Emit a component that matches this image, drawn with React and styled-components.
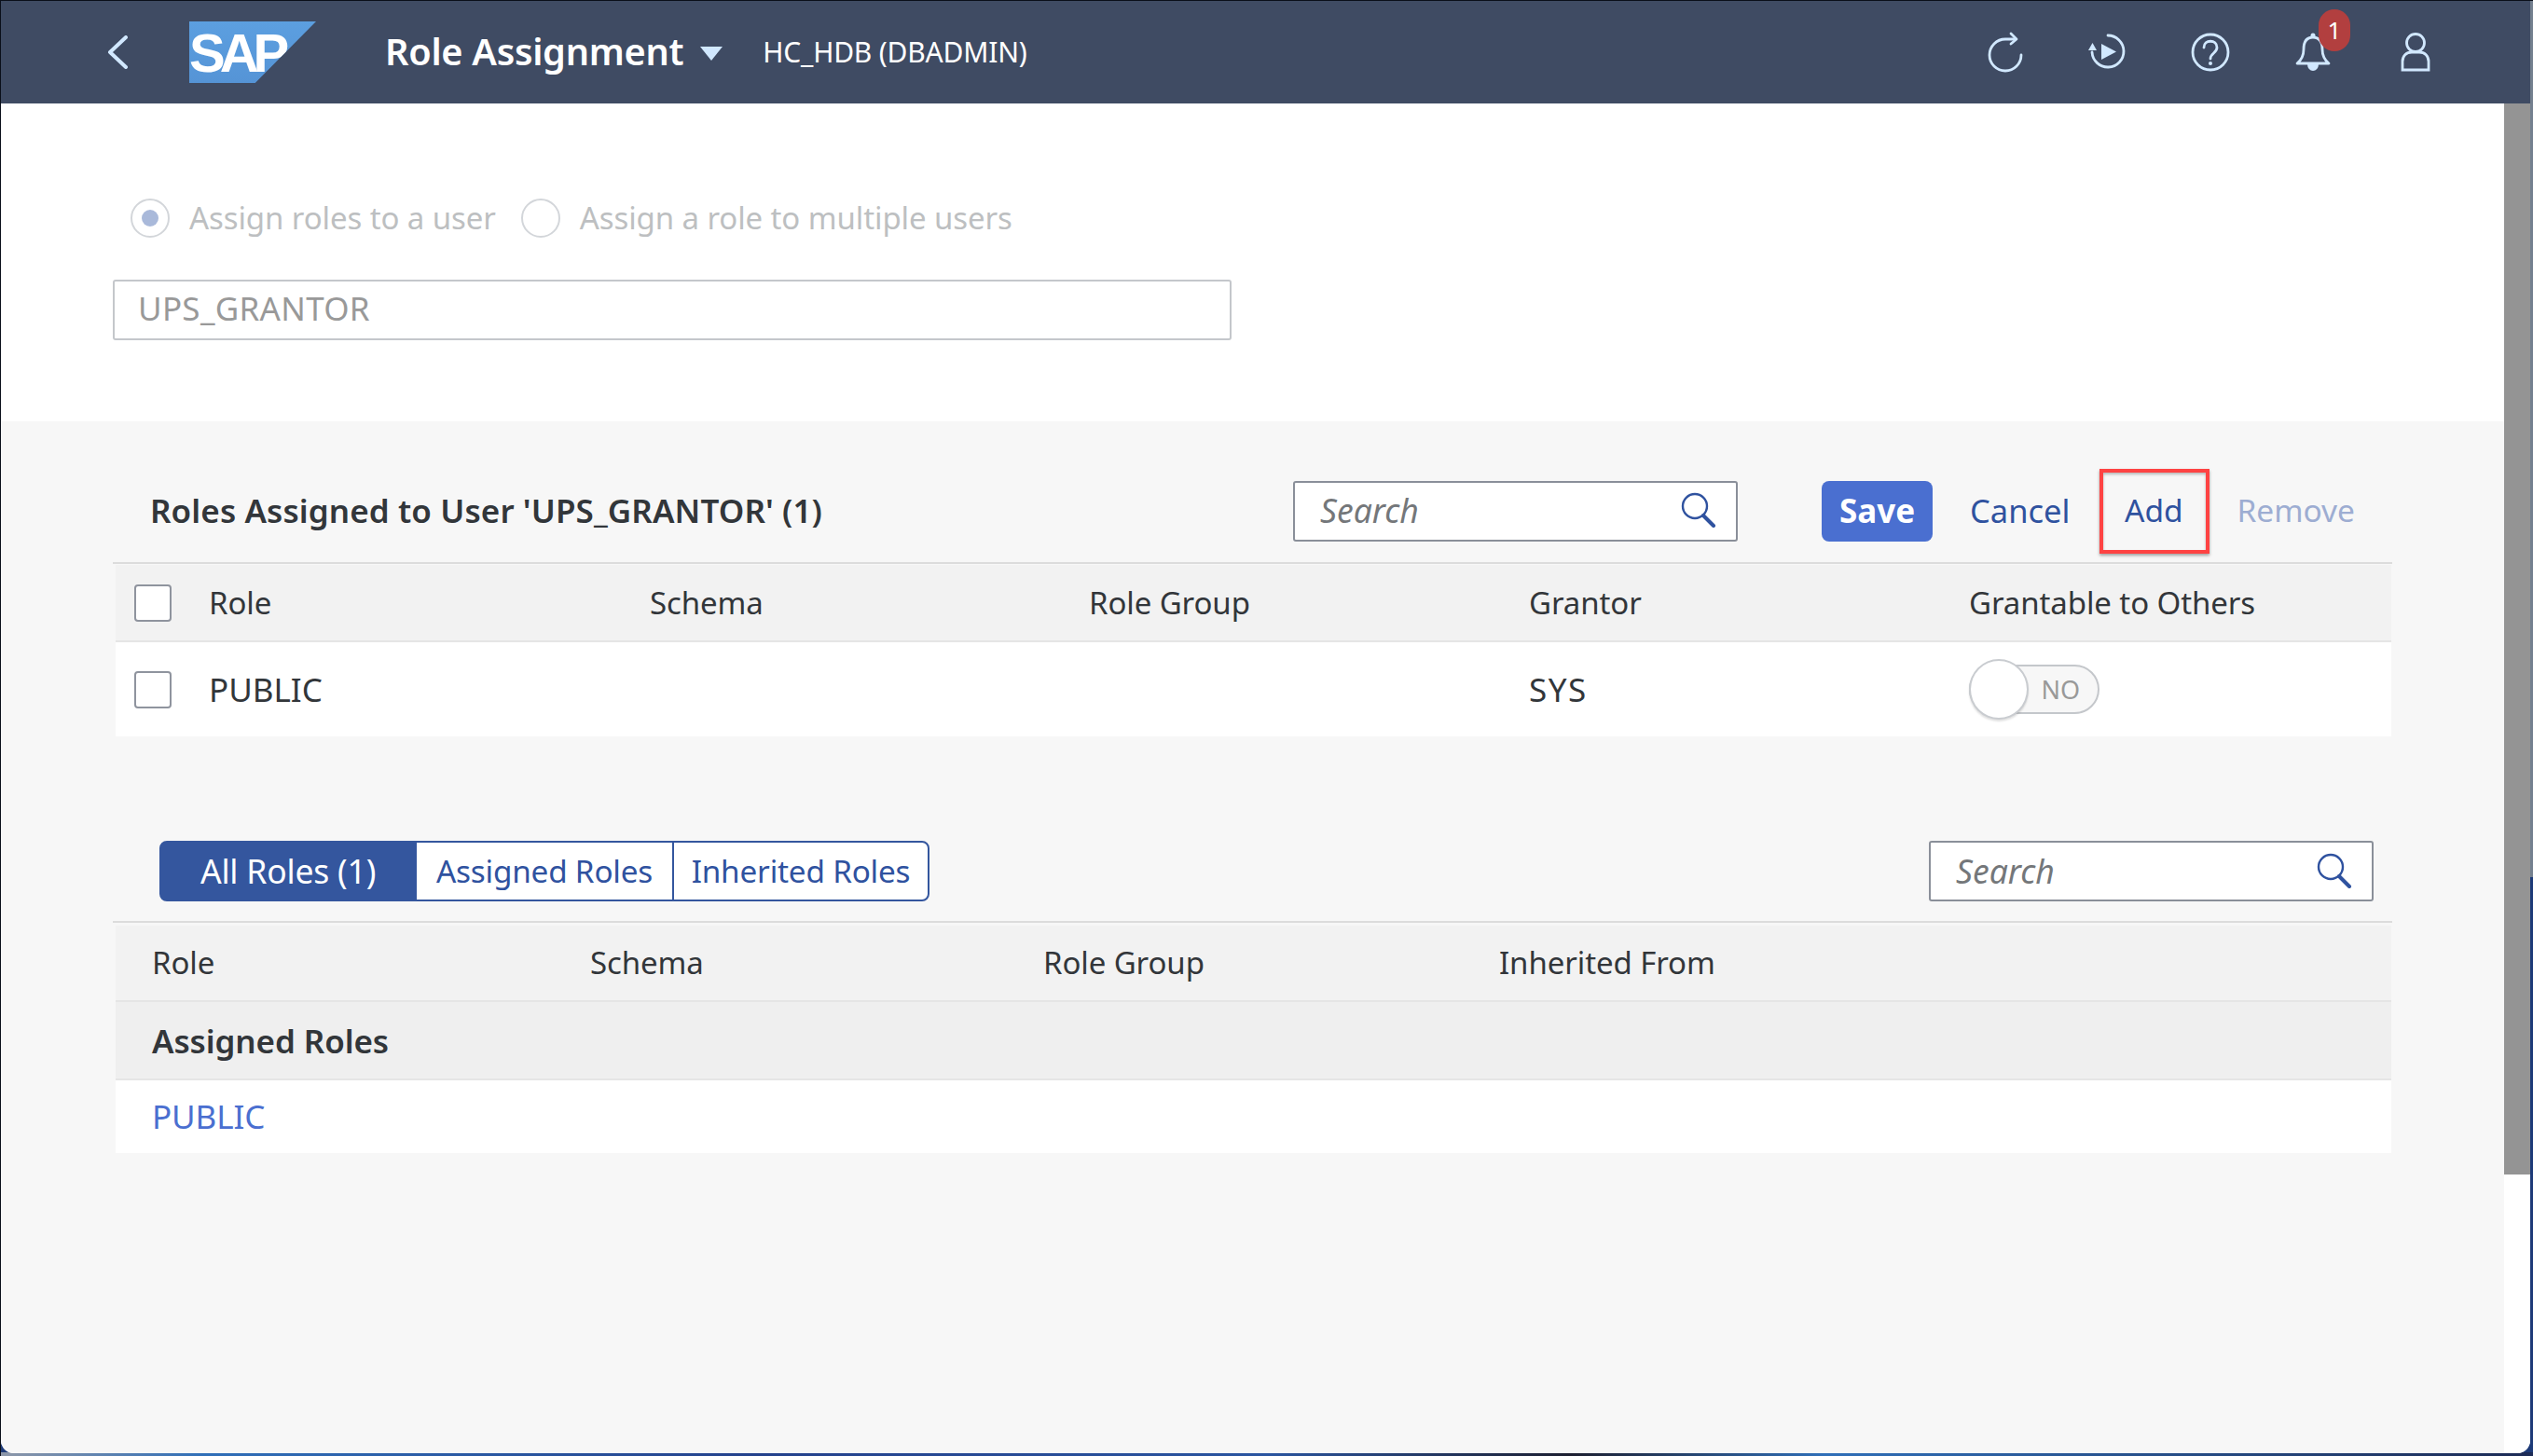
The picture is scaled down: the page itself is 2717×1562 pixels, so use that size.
import React from "react"
import styled, {createGlobalStyle} from "styled-components"

const Global = createGlobalStyle`
  html, body { margin: 0; padding: 0; background: #1d2b55; }
  body { font-family: "Noto Sans", "Open Sans", sans-serif; color: #32363a; }
`

const Screen = styled.div`
  width: 2717px;
  height: 1562px;
  overflow: hidden;
  box-sizing: border-box;
  padding: 0 3px 3px 0;
  border-top: 1px solid #0a0f1a;
  border-left: 1px solid #0a0f1a;
  background:
    linear-gradient(90deg, #8d97a8 0, #2f6fb8 8%, #24418c 30%, #2a55a0 50%, #1d1f30 62%, #2f6fb8 72%, #1d2b55 100%) bottom / 100% 4px no-repeat,
    linear-gradient(180deg, #74808f 0, #74808f 940px, #1d3a78 940px);
`

const Window = styled.div`
  height: 100%;
  display: flex;
  flex-direction: column;
  background: #fff;
  border-radius: 0 0 14px 14px;
  overflow: hidden;
`

const Shell = styled.header`
  flex: 0 0 110px;
  display: flex;
  align-items: center;
  background: #3f4b63;
  color: #fff;
  padding-left: 113px;
`

const LogoBox = styled.div`
  width: 136px;
  height: 66px;
  margin: 0 74px 0 65px;
  background: linear-gradient(180deg, #5c9fe0, #5594d6);
  clip-path: polygon(0 0, 100% 0, 52% 100%, 0 100%);
  color: #fff;
  font: 700 58px/68px "Liberation Sans", sans-serif;
  letter-spacing: -6px;
  padding-left: 0;
  box-sizing: border-box;
`

const AppTitle = styled.h1`
  margin: 0;
  font-size: 39.7px;
  font-weight: 600;
  letter-spacing: -0.3px;
  line-height: 1;
`

const Caret = styled.svg`
  width: 24px;
  height: 15px;
  margin: 3px 43px 0 18px;
`

const SystemName = styled.span`
  font-size: 30px;
  letter-spacing: -0.2px;
  padding-bottom: 2px;
`

const ShellIcons = styled.div`
  margin-left: auto;
  display: flex;
  align-items: center;
  gap: 70px;
  padding-right: 103px;
`

const ShellIcon = styled.div`
  position: relative;
  width: 40px;
  height: 42px;
  svg {
    display: block;
    width: 100%;
    height: 100%;
    overflow: visible;
    fill: none;
    stroke: #d1e8ff;
    stroke-width: 2.8;
    stroke-linecap: round;
    stroke-linejoin: round;
  }
`

const Badge = styled.span`
  position: absolute;
  top: -25px;
  left: 26px;
  width: 34px;
  height: 45px;
  border-radius: 17px;
  background: #b23f3f;
  color: #fff;
  font-size: 26px;
  line-height: 44px;
  text-align: center;
`

const Body = styled.div`
  flex: 1;
  display: flex;
  min-height: 0;
`

const Main = styled.main`
  flex: 1;
  display: flex;
  flex-direction: column;
  min-width: 0;
`

const Scroller = styled.div`
  flex: 0 0 28px;
  background: #fff;
`

const ScrollThumb = styled.div`
  height: 1149px;
  background: #949494;
`

const TopPanel = styled.section`
  flex: 0 0 341px;
  box-sizing: border-box;
  padding: 102px 0 0 120px;
`

const RadioRow = styled.div`
  display: flex;
  align-items: center;
  height: 41px;
  margin-left: 19px;
  color: #bdbfc1;
  font-size: 33px;
`

const RadioMark = styled.span`
  flex: none;
  box-sizing: border-box;
  width: 42px;
  height: 42px;
  border: 2px solid #d3d6da;
  border-radius: 50%;
  margin-right: 21px;
  display: flex;
  align-items: center;
  justify-content: center;
  &::after {
    content: "";
    width: 18px;
    height: 18px;
    border-radius: 50%;
    background: ${p => (p.$on ? "#a9b9da" : "transparent")};
  }
`

const RadioText = styled.span`
  margin-right: 27px;
  letter-spacing: -0.1px;
`

const UserField = styled.div`
  box-sizing: border-box;
  width: 1200px;
  height: 65px;
  margin-top: 46px;
  padding-left: 25px;
  border: 2px solid #c4c7cb;
  border-radius: 3px;
  color: #999;
  font-size: 35px;
  letter-spacing: 0.3px;
  line-height: 58px;
`

const GreyPanel = styled.section`
  flex: 1;
  background: #f7f7f7;
  padding: 0 120px;
`

const Toolbar = styled.div`
  display: flex;
  align-items: center;
  height: ${p => p.$height}px;
  padding: ${p => p.$top}px ${p => p.$right}px 0 ${p => p.$left}px;
  box-sizing: border-box;
`

const SectionTitle = styled.h2`
  flex: 0 0 1226px;
  margin: 0 0 2px;
  font-size: 35px;
  font-weight: 600;
  letter-spacing: 0.1px;
`

const SearchBox = styled.div`
  box-sizing: border-box;
  flex: none;
  width: 477px;
  height: 65px;
  margin-left: ${p => (p.$auto ? "auto" : "0")};
  display: flex;
  align-items: center;
  justify-content: space-between;
  padding: 0 21px 2px 27px;
  background: #fff;
  border: 2px solid #8a8f99;
  border-radius: 3px;
  color: #74777a;
  font-size: 35.5px;
  font-style: italic;
  svg { width: 38px; height: 38px; fill: none; stroke: #2f529f; stroke-width: 2.4; }
`

const SaveButton = styled.button`
  width: 119px;
  height: 65px;
  margin-left: 90px;
  border: 0;
  border-radius: 8px;
  background: #4a6fd0;
  color: #fff;
  font: 700 35px "Noto Sans", sans-serif;
  padding: 0 0 2px;
`

const TextButton = styled.span`
  font-size: ${p => p.$size}px;
  color: ${p => (p.$off ? "#9dadd2" : "#2f529f")};
  margin-left: ${p => p.$gap}px;
  padding-bottom: 2px;
`

const Highlight = styled.div`
  box-sizing: border-box;
  width: 118px;
  height: 91px;
  margin-left: 32px;
  display: flex;
  align-items: center;
  justify-content: center;
  padding: 0 2px 2px 0;
  border: 4px solid #ff4343;
  box-shadow: 0 2px 3px rgba(0, 0, 0, 0.35), inset 0 2px 3px rgba(0, 0, 0, 0.25);
  color: #2f529f;
  font-size: 33.5px;
`

const TableRule = styled.div`
  height: 2px;
  background: #dcdcdc;
  margin-bottom: ${p => p.$gap}px;
`

const Row = styled.div`
  display: grid;
  grid-template-columns: ${p => p.$cols};
  align-items: center;
  box-sizing: border-box;
  height: ${p => p.$h}px;
  margin: 0 1px 0 3px;
  padding: 0 0 ${p => p.$lift || 0}px ${p => p.$pad}px;
  background: ${p => p.$bg};
  border-bottom: ${p => (p.$line ? "2px solid #e5e5e5" : "0")};
  font-size: ${p => (p.$bold ? 35 : 33)}px;
  font-weight: ${p => (p.$bold ? 600 : 400)};
  letter-spacing: -0.1px;
`

const CheckCell = styled.div`
  display: flex;
  align-items: center;
  gap: 40px;
`

const Check = styled.span`
  flex: none;
  box-sizing: border-box;
  width: 40px;
  height: 40px;
  background: #fff;
  border: 2px solid #8f949e;
  border-radius: 4px;
`

const CapsText = styled.span`
  font-size: 35px;
  letter-spacing: ${p => p.$track || 0}px;
`

const Switch = styled.div`
  position: relative;
  box-sizing: border-box;
  width: 140px;
  height: 53px;
  background: #f7f7f7;
  border: 2px solid #c4c7cb;
  border-radius: 27px;
  color: #999;
  font-size: 27px;
  line-height: 49px;
  text-align: right;
  padding-right: 19px;
  &::before {
    content: "";
    position: absolute;
    left: -2px;
    top: -8px;
    box-sizing: border-box;
    width: 64px;
    height: 65px;
    background: #fff;
    border: 2px solid #c9ccd0;
    border-radius: 50%;
    box-shadow: 0 2px 2px rgba(0, 0, 0, 0.12);
  }
`

const Segmented = styled.div`
  display: flex;
  height: 65px;
`

const Segment = styled.div`
  box-sizing: border-box;
  width: ${p => p.$w}px;
  display: flex;
  align-items: center;
  justify-content: center;
  padding-bottom: 2px;
  font-size: ${p => (p.$on ? 35.5 : 33.3)}px;
  letter-spacing: -0.2px;
  background: ${p => (p.$on ? "#34569e" : "#fff")};
  color: ${p => (p.$on ? "#fff" : "#2f529f")};
  border: 2px solid #34569e;
  border-left-width: ${p => (p.$first ? 2 : 1)}px;
  border-right-width: ${p => (p.$last ? 2 : 1)}px;
  border-radius: ${p => (p.$first ? "8px 0 0 8px" : p.$last ? "0 8px 8px 0" : "0")};
`

const RoleLink = styled.a`
  color: #4a6fd0;
  font-size: 35px;
`

const Spacer = styled.div`
  height: ${p => p.$h}px;
`

const SearchIcon = () => (
  <svg viewBox="0 0 38 38"><circle cx="15" cy="15" r="13" /><path d="M24 25l11 11" strokeWidth="4" strokeLinecap="round" /></svg>
)

const upperCols = "553px 471px 472px 472px 1fr"
const lowerCols = "470px 486px 489px 1fr"

const Search = ({auto}) => (
  <SearchBox $auto={auto}><span>Search</span><SearchIcon /></SearchBox>
)

export default function App() {
  return (
    <Screen>
      <Global />
      <Window>
        <Shell>
          <svg width="24" height="36" viewBox="0 0 24 36" fill="none" stroke="#d1e8ff" strokeWidth="4" strokeLinecap="round" strokeLinejoin="round"><path d="M21 2L4 18l17 16" /></svg>
          <LogoBox>SAP</LogoBox>
          <AppTitle>Role Assignment</AppTitle>
          <Caret viewBox="0 0 24 15"><path d="M0 0h24L12 15z" fill="#d1e8ff" /></Caret>
          <SystemName>HC_HDB (DBADMIN)</SystemName>
          <ShellIcons>
            <ShellIcon>
              <svg viewBox="0 0 40 42"><path d="M31 7H20a17 17 0 1 0 17 17" /><path d="M26 1l6 6-6 5" /></svg>
            </ShellIcon>
            <ShellIcon>
              <svg viewBox="0 0 40 42"><path d="M20 3a17 17 0 1 1-17 18" /><path d="M3.500 11l4.500 8H-1z" fill="#d1e8ff" stroke="none" /><path d="M13 12l16 8.500L13 29z" fill="#d1e8ff" stroke="none" /></svg>
            </ShellIcon>
            <ShellIcon>
              <svg viewBox="0 0 40 42"><circle cx="20" cy="21" r="19" /><path d="M13 16c0-9 14-9 14 0 0 6-7 6-7 12" /><circle cx="20" cy="33" r="2" fill="#d1e8ff" stroke="none" /></svg>
            </ShellIcon>
            <ShellIcon>
              <svg viewBox="0 0 40 42"><path d="M3 33h34c-5-4-7-9-7-15C30 9 26 5 20 5S10 9 10 18c0 6-2 11-7 15z" /><circle cx="20" cy="3" r="2.500" fill="#d1e8ff" stroke="none" /><path d="M14 34a6 7 0 0 0 12 0z" fill="#d1e8ff" stroke="none" /></svg>
              <Badge>1</Badge>
            </ShellIcon>
            <ShellIcon>
              <svg viewBox="0 0 40 42"><circle cx="20" cy="11" r="9.500" /><path d="M6 40v-9c0-6 4-10 10-10h8c6 0 10 4 10 10v9z" strokeLinejoin="miter" /></svg>
            </ShellIcon>
          </ShellIcons>
        </Shell>
        <Body>
          <Main>
            <TopPanel>
              <RadioRow>
                <RadioMark $on />
                <RadioText>Assign roles to a user</RadioText>
                <RadioMark />
                <RadioText>Assign a role to multiple users</RadioText>
              </RadioRow>
              <UserField>UPS_GRANTOR</UserField>
            </TopPanel>
            <GreyPanel>
              <Toolbar $height={151} $top={41} $left={40} $right={0}>
                <SectionTitle>Roles Assigned to User 'UPS_GRANTOR' (1)</SectionTitle>
                <Search />
                <SaveButton>Save</SaveButton>
                <TextButton $size={34.5} $gap={40}>Cancel</TextButton>
                <Highlight>Add</Highlight>
                <TextButton $off $size={33.5} $gap={29}>Remove</TextButton>
              </Toolbar>
              <TableRule $gap={1} />
              <Row $cols={upperCols} $h={83} $pad={20} $bg="#f2f2f2" $line>
                <CheckCell><Check />Role</CheckCell>
                <span>Schema</span>
                <span>Role Group</span>
                <span>Grantor</span>
                <span>Grantable to Others</span>
              </Row>
              <Row $cols={upperCols} $h={101} $pad={20} $bg="#fff">
                <CheckCell><Check /><CapsText>PUBLIC</CapsText></CheckCell>
                <span />
                <span />
                <CapsText $track={1.5}>SYS</CapsText>
                <Switch>NO</Switch>
              </Row>
              <Spacer $h={112} />
              <Toolbar $height={65} $top={0} $left={50} $right={20}>
                <Segmented>
                  <Segment $first $on $w={275}>All Roles (1)</Segment>
                  <Segment $w={276}>Assigned Roles</Segment>
                  <Segment $last $w={275}>Inherited Roles</Segment>
                </Segmented>
                <Search auto />
              </Toolbar>
              <Spacer $h={21} />
              <TableRule $gap={3} />
              <Row $cols={lowerCols} $h={82} $pad={39} $lift={2} $bg="#f2f2f2" $line>
                <span>Role</span>
                <span>Schema</span>
                <span>Role Group</span>
                <span>Inherited From</span>
              </Row>
              <Row $cols={lowerCols} $h={84} $pad={39} $bg="#efefef" $line $bold>
                <span>Assigned Roles</span>
              </Row>
              <Row $cols={lowerCols} $h={78} $pad={39} $lift={2} $bg="#fff">
                <RoleLink>PUBLIC</RoleLink>
              </Row>
            </GreyPanel>
          </Main>
          <Scroller><ScrollThumb /></Scroller>
        </Body>
      </Window>
    </Screen>
  )
}
